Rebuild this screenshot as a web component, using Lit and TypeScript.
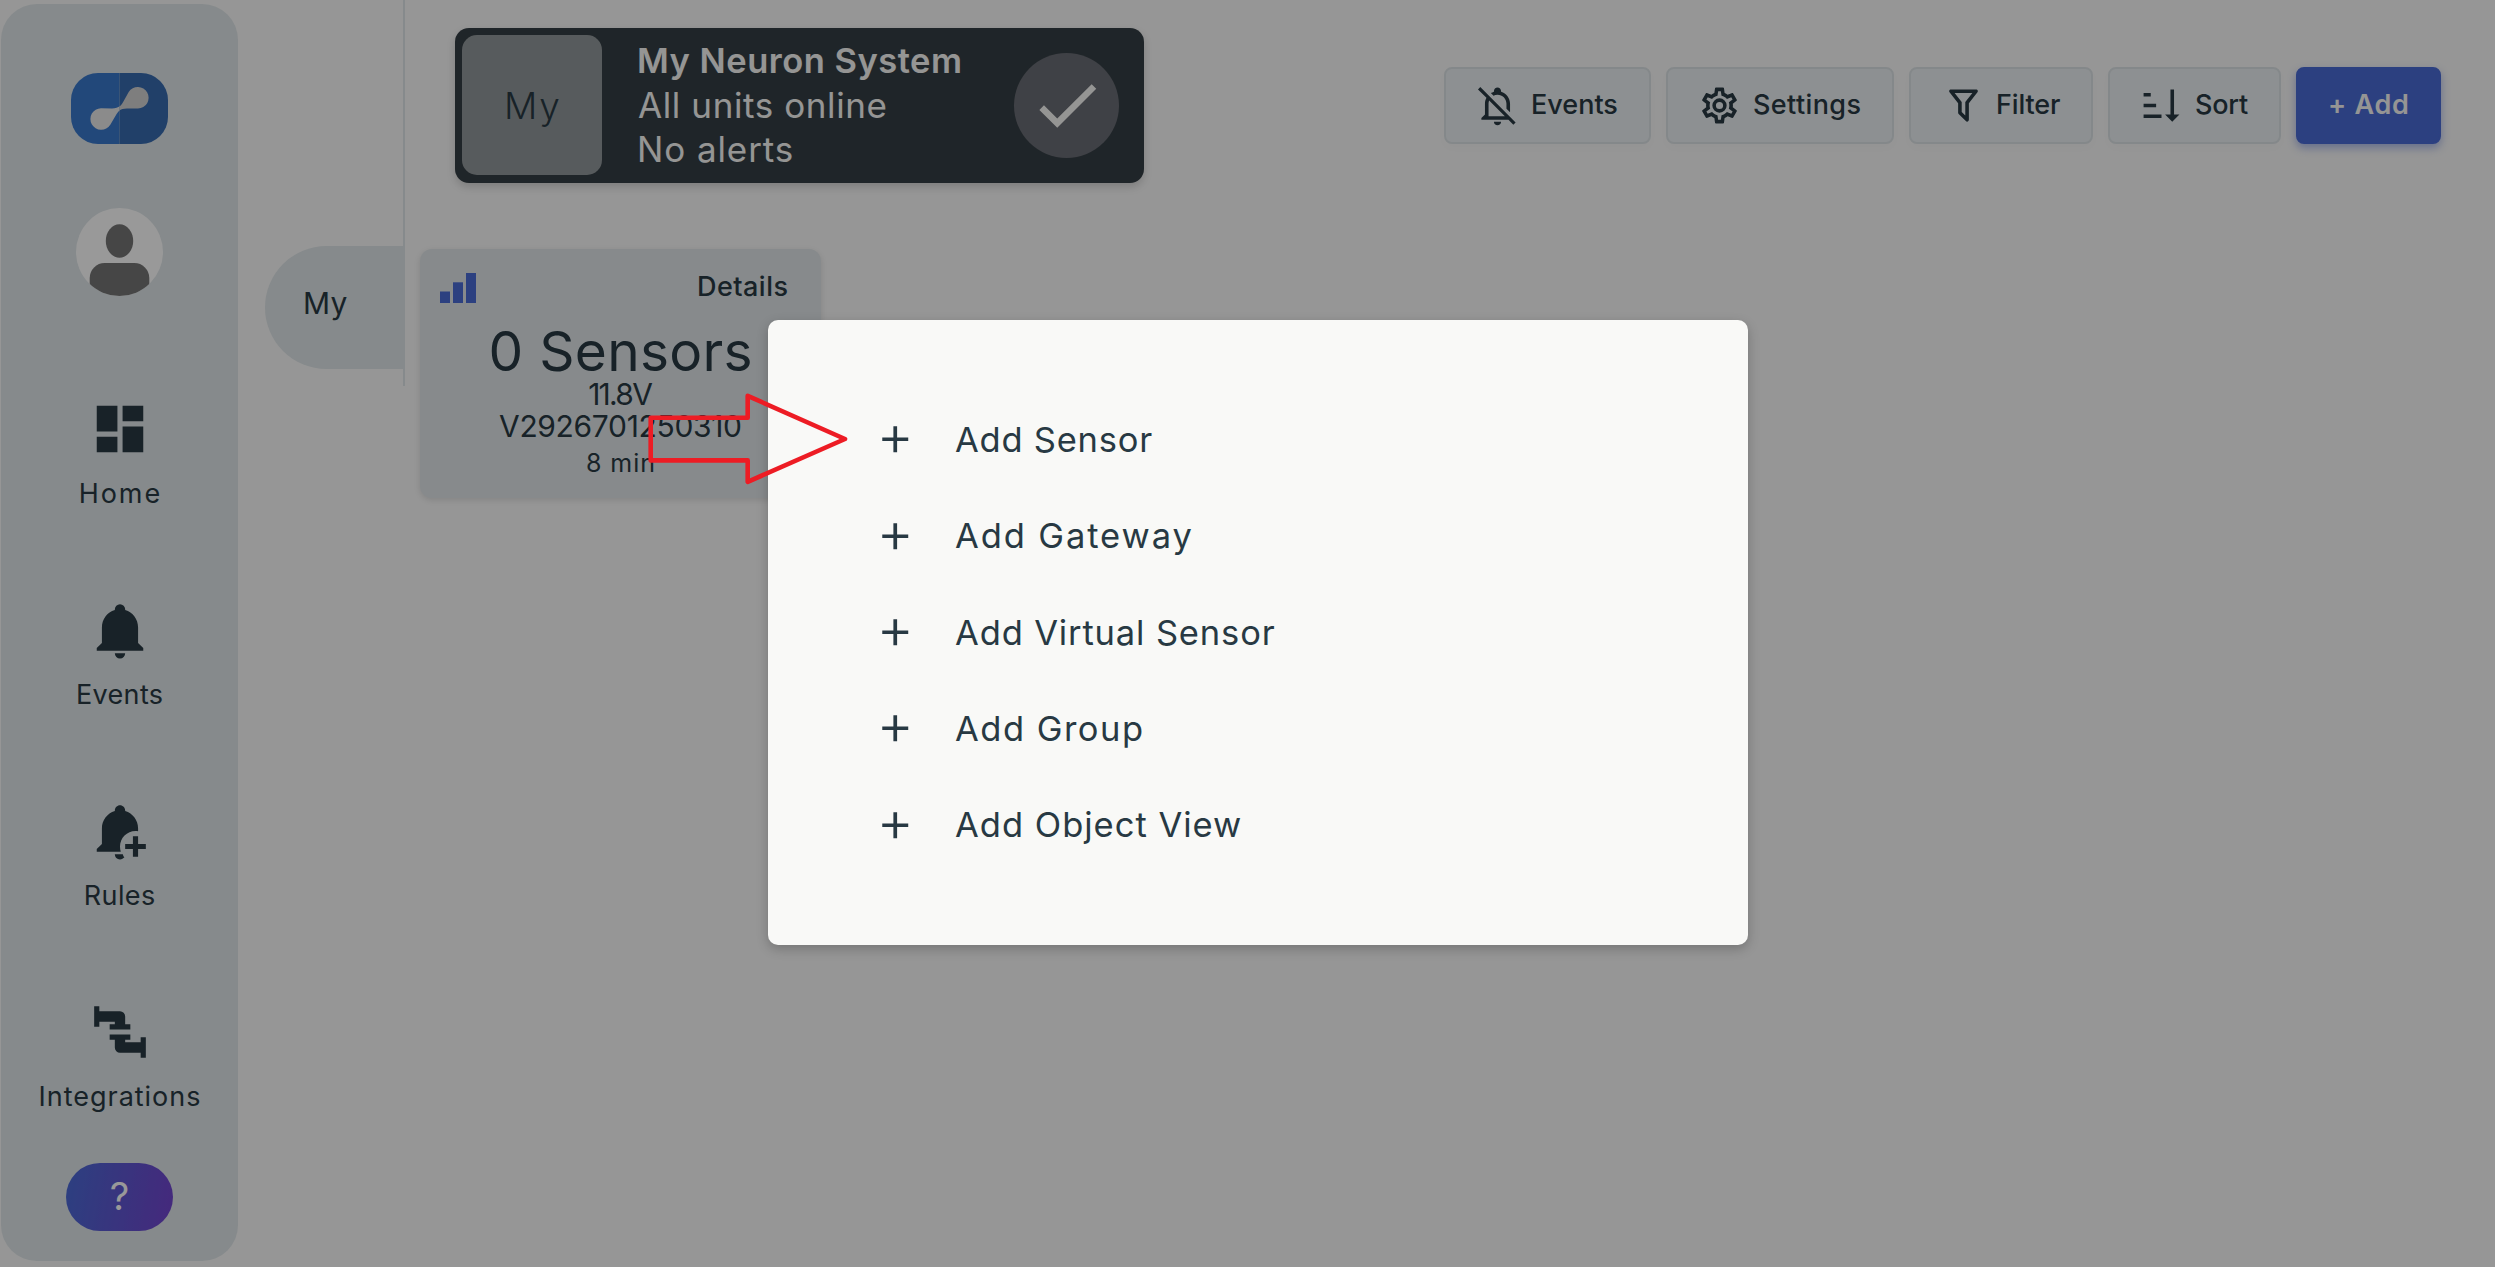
import { LitElement, html, css, svg } from "lit";
import { customElement, property } from "lit/decorators.js";

const ICONS: Record<string, string> = {
  home: "M13,3V9H21V3M13,21H21V11H13M3,21H11V15H3M3,13H11V3H3V13Z",
  bell: "M21,19V20H3V19L5,17V11C5,7.9 7.03,5.17 10,4.29C10,4.19 10,4.1 10,4A2,2 0 0,1 12,2A2,2 0 0,1 14,4C14,4.1 14,4.19 14,4.29C16.97,5.17 19,7.9 19,11V17L21,19M14,21A2,2 0 0,1 12,23A2,2 0 0,1 10,21",
  bellPlus:
    "M10 21H13.1C13.2 21.5 13.4 22 13.7 22.2C13.3 22.7 12.7 23 12 23C10.9 23 10 22.1 10 21M12 18C12 18.7 12.1 19.4 12.3 20H3V19L5 17V11C5 7.9 7 5.2 10 4.3V4C10 2.9 10.9 2 12 2S14 2.9 14 4V4.3C17 5.2 19 7.9 19 11V12.1C18.7 12 18.3 12 18 12C14.7 12 12 14.7 12 18M19 17V14H17V17H14V19H17V22H19V19H22V17H19Z",
  pipe: "M16,9V11H8V9H10V8H4V10H2V2H4V4H12A2,2 0 0,1 14,6V9H16M10,15V18A2,2 0 0,0 12,20H20V22H22V14H20V16H14V15H16V13H8V15H10Z",
  check: "M21,7L9,19L3.5,13.5L4.91,12.09L9,16.17L19.59,5.59L21,7Z",
  bellOff:
    "M22.11 21.46L2.39 1.73L1.11 3L5.83 7.72C5.29 8.73 5 9.86 5 11V17L3 19V20H18.11L20.84 22.73L22.11 21.46M7 18V11C7 10.39 7.11 9.79 7.34 9.23L16.11 18H7M10 21H14C14 22.11 13.11 23 12 23S10 22.11 10 21M8.29 5.09C8.82 4.75 9.4 4.5 10 4.29C10 4.19 10 4.1 10 4C10 2.9 10.9 2 12 2S14 2.9 14 4C14 4.1 14 4.19 14 4.29C16.97 5.17 19 7.9 19 11V15.8L17 13.8V11C17 8.24 14.76 6 12 6C11.22 6 10.45 6.2 9.76 6.56L8.29 5.09Z",
  cog: "M12,8A4,4 0 0,1 16,12A4,4 0 0,1 12,16A4,4 0 0,1 8,12A4,4 0 0,1 12,8M12,10A2,2 0 0,0 10,12A2,2 0 0,0 12,14A2,2 0 0,0 14,12A2,2 0 0,0 12,10M10,22C9.75,22 9.54,21.82 9.5,21.58L9.13,18.93C8.5,18.68 7.96,18.34 7.44,17.94L4.95,18.95C4.73,19.03 4.46,18.95 4.34,18.73L2.34,15.27C2.21,15.05 2.27,14.78 2.46,14.63L4.57,12.97L4.5,12L4.57,11L2.46,9.37C2.27,9.22 2.21,8.95 2.34,8.73L4.34,5.27C4.46,5.05 4.73,4.96 4.95,5.05L7.44,6.05C7.96,5.66 8.5,5.32 9.13,5.07L9.5,2.42C9.54,2.18 9.75,2 10,2H14C14.25,2 14.46,2.18 14.5,2.42L14.87,5.07C15.5,5.32 16.04,5.66 16.56,6.05L19.05,5.05C19.27,4.96 19.54,5.05 19.66,5.27L21.66,8.73C21.79,8.95 21.73,9.22 21.54,9.37L19.43,11L19.5,12L19.43,13L21.54,14.63C21.73,14.78 21.79,15.05 21.66,15.27L19.66,18.73C19.54,18.95 19.27,19.04 19.05,18.95L16.56,17.95C16.04,18.34 15.5,18.68 14.87,18.93L14.5,21.58C14.46,21.82 14.25,22 14,22H10M11.25,4L10.88,6.61C9.68,6.86 8.62,7.5 7.85,8.39L5.44,7.35L4.69,8.65L6.8,10.2C6.4,11.37 6.4,12.64 6.8,13.8L4.68,15.36L5.43,16.66L7.86,15.62C8.63,16.5 9.68,17.14 10.87,17.38L11.24,20H12.76L13.13,17.39C14.32,17.14 15.37,16.5 16.14,15.62L18.57,16.66L19.32,15.36L17.2,13.81C17.6,12.64 17.6,11.37 17.2,10.2L19.31,8.65L18.56,7.35L16.15,8.39C15.38,7.5 14.32,6.86 13.12,6.62L12.75,4H11.25Z",
  filter:
    "M15,19.88C15.04,20.18 14.94,20.5 14.71,20.71C14.32,21.1 13.69,21.1 13.3,20.71L9.29,16.7C9.06,16.47 8.96,16.16 9,15.87V10.75L4.21,4.62C3.87,4.19 3.95,3.56 4.38,3.22C4.57,3.08 4.78,3 5,3V3H19V3C19.22,3 19.43,3.08 19.62,3.22C20.05,3.56 20.13,4.19 19.79,4.62L15,10.75V19.88M7.04,5L11,10.06V15.58L13,17.58V10.05L16.96,5H7.04Z",
  sort: "M19 17H22L18 21L14 17H17V3H19M2 17H12V19H2M6 5V7H2V5M2 11H9V13H2V11Z",
  plus: "M19,13H13V19H11V13H5V11H11V5H13V11H19V13Z",
};

// Two round lobes joined by a narrow neck.
const LINK =
  "M30,35.2L41,35.4C46.5,35.4 49.3,34 52,29.3L57.7,19A10.8,10.8 0 1 1 67,35.6L56,35.4C50.8,35.4 48,36.8 45.3,41.5L39.3,51.8A10.8,10.8 0 1 1 30,35.2Z";

@customElement("mdi-icon")
export class MdiIcon extends LitElement {
  static styles = css`
    :host {
      display: block;
      flex: none;
    }
    svg {
      display: block;
      width: 100%;
      height: 100%;
      fill: currentColor;
    }
  `;
  @property() name = "";
  render() {
    return html`<svg viewBox="0 0 24 24">${svg`<path d=${ICONS[this.name] ?? ""}></path>`}</svg>`;
  }
}

const NAV = [
  { icon: "home", label: "Home", spacing: 1.9 },
  { icon: "bell", label: "Events", spacing: 0.35 },
  { icon: "bellPlus", label: "Rules", spacing: 0.35 },
  { icon: "pipe", label: "Integrations", spacing: 0.97 },
];

const TOOLS = [
  { icon: "bellOff", label: "Events", spacing: 0, cls: "events" },
  { icon: "cog", label: "Settings", spacing: 0.4, cls: "settings" },
  { icon: "filter", label: "Filter", spacing: -0.14, cls: "filter" },
  { icon: "sort", label: "Sort", spacing: -0.22, cls: "sort" },
];

const ACTIONS = [
  { label: "Add Sensor", spacing: 0.77 },
  { label: "Add Gateway", spacing: 1.9 },
  { label: "Add Virtual Sensor", spacing: 0.86 },
  { label: "Add Group", spacing: 1.49 },
  { label: "Add Object View", spacing: 1 },
];

@customElement("app-root")
export class AppRoot extends LitElement {
  static styles = css`
    :host {
      display: block;
      width: 2495px;
      height: 1267px;
      overflow: hidden;
      position: relative;
      background: #fafafa;
      color: #283943;
      font-family: Inter, "Open Sans", sans-serif;
      font-weight: 400;
    }
    * {
      box-sizing: border-box;
    }
    .t {
      letter-spacing: var(--ls, 0);
      margin-right: calc(var(--ls, 0px) * -1);
      white-space: nowrap;
    }
    .page {
      display: flex;
      height: 100%;
    }

    .sidebar {
      flex: none;
      width: 237px;
      height: 1257px;
      margin: 4px 0 0 1px;
      padding-top: 69px;
      border-radius: 36px;
      background: #dfe6e9;
      display: flex;
      flex-direction: column;
      align-items: center;
    }
    .logo {
      width: 97px;
      height: 71px;
    }
    .avatar {
      width: 87px;
      height: 88px;
      margin-top: 64px;
    }
    .logo,
    .avatar {
      display: block;
      flex: none;
    }
    nav {
      margin-top: 102px;
      display: flex;
      flex-direction: column;
      gap: 87px;
    }
    .nav-item {
      display: flex;
      flex-direction: column;
      align-items: center;
      gap: 16px;
      font-size: 27px;
      line-height: 36px;
    }
    .nav-item mdi-icon {
      width: 62px;
      height: 62px;
    }
    .help {
      flex: none;
      width: 107px;
      height: 68px;
      margin-top: 48px;
      border-radius: 34px;
      background: linear-gradient(100deg, #4a6bd6, #7444cf);
      color: #fff;
      font-size: 38px;
      line-height: 66px;
      text-align: center;
    }

    .tabs {
      flex: none;
      width: 140px;
      height: 386px;
      margin-left: 27px;
      padding-top: 246px;
      border-right: 2px solid #dfe6e9;
    }
    .tab {
      height: 123px;
      margin-right: 0;
      padding-left: 38px;
      border-radius: 62px 0 0 62px;
      background: #dfe6e9;
      font-size: 30px;
      line-height: 115px;
      --ls: 0.3px;
    }

    main {
      flex: 1;
      padding: 28px 54px 0 15px;
    }
    header {
      display: flex;
      align-items: flex-start;
      padding-left: 35px;
    }
    .banner {
      width: 689px;
      height: 155px;
      padding: 7px 25px 8px 7px;
      border-radius: 14px;
      background: #353f45;
      box-shadow: 0 4px 8px rgba(0, 0, 0, 0.16);
      color: #f9f9f7;
      display: flex;
      align-items: center;
    }
    .banner-tile {
      width: 140px;
      height: 140px;
      border-radius: 15px;
      background: #92989b;
      color: #283943;
      font-size: 37px;
      font-weight: 300;
      display: flex;
      align-items: center;
      justify-content: center;
      --ls: 1.8px;
    }
    .banner-text {
      flex: 1;
      margin-left: 35px;
      font-size: 35px;
      line-height: 44px;
    }
    .banner-title {
      font-size: 34.5px;
      font-weight: 600;
      --ls: 0.5px;
    }
    .online {
      padding-left: 1px;
      --ls: 0.6px;
    }
    .alerts {
      --ls: 0.9px;
    }
    .status {
      width: 105px;
      height: 105px;
      border-radius: 50%;
      background: #6a6d75;
      display: flex;
      align-items: center;
      justify-content: center;
    }
    .status mdi-icon {
      width: 78px;
      height: 78px;
    }

    .toolbar {
      margin: 39px 0 0 auto;
      display: flex;
      gap: 15px;
    }
    .btn {
      height: 77px;
      padding-left: 30px;
      padding-bottom: 2px;
      border: 2px solid #dde3e6;
      border-radius: 8px;
      background: #ecf1f4;
      box-shadow: 0 4px 8px rgba(0, 0, 0, 0.02);
      font-size: 27px;
      font-weight: 500;
      display: flex;
      align-items: center;
      gap: 12px;
    }
    .btn mdi-icon {
      width: 43px;
      height: 43px;
      margin-top: 2px;
    }
    .events {
      width: 207px;
    }
    .settings {
      width: 228px;
    }
    .filter {
      width: 184px;
    }
    .sort {
      width: 173px;
    }
    .filter mdi-icon {
      margin-left: 1px;
      margin-right: -1px;
    }
    .add {
      width: 145px;
      padding-left: 30px;
      border-color: #4a6bd6;
      background: #4a6bd6;
      box-shadow: 0 4px 8px rgba(74, 107, 214, 0.45);
      color: #f9f9f7;
      font-weight: 600;
      --ls: 0.74px;
    }

    .card {
      width: 401px;
      height: 249px;
      margin-top: 66px;
      border-radius: 12px;
      background: #e1e7ea;
      box-shadow: 0 2px 6px rgba(0, 0, 0, 0.12);
      display: flex;
      flex-direction: column;
      align-items: center;
    }
    .card-head {
      align-self: stretch;
      display: flex;
      justify-content: space-between;
      align-items: center;
      height: 75px;
      padding: 0 33px 0 20px;
    }
    .signal {
      width: 36px;
      height: 30px;
      margin-top: 2px;
    }
    .details {
      font-size: 27px;
      font-weight: 500;
      --ls: 0.48px;
    }
    .count {
      font-size: 55px;
      line-height: 54px;
      --ls: 0.3px;
    }
    .volts,
    .serial {
      font-size: 30px;
      line-height: 32px;
      --ls: -1.73px;
    }
    .serial {
      --ls: -0.33px;
    }
    .age {
      margin-top: 3px;
      font-size: 25px;
      line-height: 36px;
      --ls: 1px;
    }

    .overlay {
      position: absolute;
      inset: 0;
      background: rgba(0, 0, 0, 0.4);
      display: flex;
      align-items: flex-start;
      padding: 320px 0 0 768px;
    }
    .modal {
      width: 980px;
      height: 625px;
      padding: 71.5px 0 0 104.5px;
      border-radius: 10px;
      background: #f9f9f7;
      box-shadow: 0 4px 12px rgba(0, 0, 0, 0.22);
    }
    .action {
      height: 96.3px;
      display: flex;
      align-items: center;
      font-size: 34.5px;
    }
    .action mdi-icon {
      width: 44.5px;
      height: 44.5px;
      margin-right: 38px;
    }
    .pointer {
      position: absolute;
      left: 640px;
      top: 390px;
      width: 214px;
      height: 98px;
    }
  `;

  render() {
    return html`
      <div class="page">
        <aside class="sidebar">
          <svg class="logo" viewBox="0 0 97 71">
            <defs>
              <clipPath id="left"><rect width="48.5" height="71"></rect></clipPath>
              <clipPath id="right"><rect x="48.5" width="48.5" height="71"></rect></clipPath>
            </defs>
            <rect width="97" height="71" rx="27" fill="#3978cc" clip-path="url(#left)"></rect>
            <rect width="97" height="71" rx="27" fill="#376bb0" clip-path="url(#right)"></rect>
            <path fill="#e8e8e8" clip-path="url(#left)" d=${LINK}></path>
            <path fill="#d2d2d2" clip-path="url(#right)" d=${LINK}></path>
          </svg>
          <svg class="avatar" viewBox="0 0 87 88">
            <clipPath id="disc"><ellipse cx="43.5" cy="44" rx="43.5" ry="44"></ellipse></clipPath>
            <ellipse cx="43.5" cy="44" rx="43.5" ry="44" fill="#fff"></ellipse>
            <ellipse cx="43.5" cy="33" rx="13.7" ry="16.7" fill="#757575"></ellipse>
            <rect x="13.7" y="55" width="59.6" height="50" rx="15" fill="#757575" clip-path="url(#disc)"></rect>
          </svg>
          <nav>
            ${NAV.map(
              (n) => html`<div class="nav-item">
                <mdi-icon name=${n.icon}></mdi-icon>
                <span class="t" style="--ls:${n.spacing}px">${n.label}</span>
              </div>`
            )}
          </nav>
          <div class="help">?</div>
        </aside>

        <div class="tabs"><div class="t tab">My</div></div>

        <main>
          <header>
            <div class="banner">
              <div class="banner-tile"><span class="t">My</span></div>
              <div class="banner-text">
                <div class="t banner-title">My Neuron System</div>
                <div class="t online">All units online</div>
                <div class="t alerts">No alerts</div>
              </div>
              <div class="status"><mdi-icon name="check"></mdi-icon></div>
            </div>
            <div class="toolbar">
              ${TOOLS.map(
                (b) => html`<div class="btn ${b.cls}">
                  <mdi-icon name=${b.icon}></mdi-icon>
                  <span class="t" style="--ls:${b.spacing}px">${b.label}</span>
                </div>`
              )}
              <div class="btn add"><span class="t">+ Add</span></div>
            </div>
          </header>

          <section class="card">
            <div class="card-head">
              <svg class="signal" viewBox="0 0 36 30" fill="#4a6bd6">
                <rect y="18.5" width="10" height="11.5"></rect>
                <rect x="13" y="9.3" width="10" height="20.7"></rect>
                <rect x="26" width="10" height="30"></rect>
              </svg>
              <span class="t details">Details</span>
            </div>
            <span class="t count">0 Sensors</span>
            <span class="t volts">11.8V</span>
            <span class="t serial">V2926701250310</span>
            <span class="t age">8 min</span>
          </section>
        </main>
      </div>

      <div class="overlay">
        <div class="modal">
          ${ACTIONS.map(
            (a) => html`<div class="action">
              <mdi-icon name="plus"></mdi-icon>
              <span class="t" style="--ls:${a.spacing}px">${a.label}</span>
            </div>`
          )}
        </div>
      </div>
      <svg class="pointer" viewBox="0 0 214 98">
        <path
          d="M10.7,27.7H107.7V5.8L205,49L107.7,91.8V70.4H10.7Z"
          fill="none"
          stroke="#ed1c24"
          stroke-width="4.6"
          stroke-linejoin="round"
        ></path>
      </svg>
    `;
  }
}
